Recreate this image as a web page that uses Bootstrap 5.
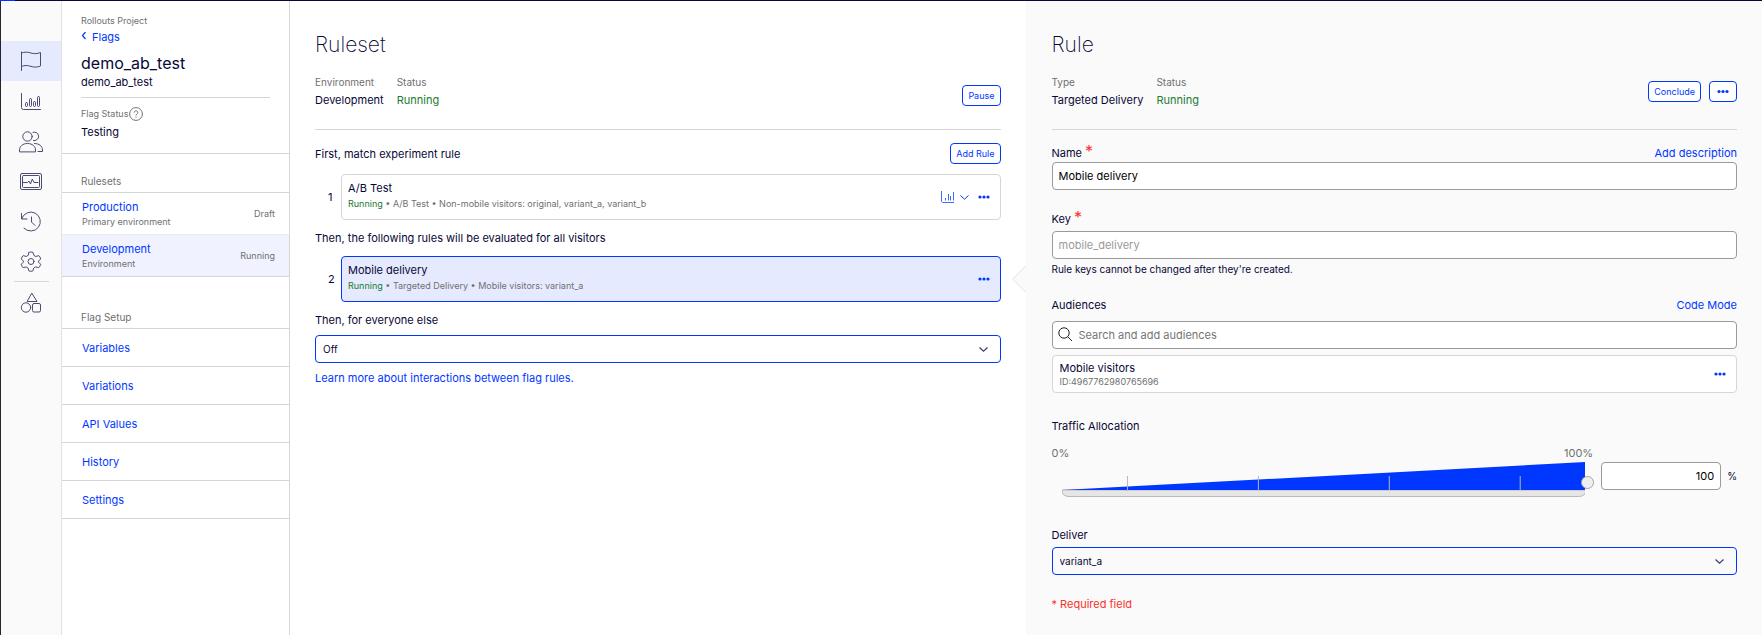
<!DOCTYPE html>
<html lang="en">
<head>
<meta charset="utf-8">
<meta name="viewport" content="width=device-width, initial-scale=1">
<title>demo_ab_test – Flags</title>
<link href="https://cdn.jsdelivr.net/npm/bootstrap@5.3.0/dist/css/bootstrap.min.css" rel="stylesheet">
<style>
  :root { --brand: #0037ff; --ink: #080736; --muted-ink: #707070; --line: #d6d6d6; --ok: #227a33; --err: #f9322c; }
  body { font: 11px/16px Inter, "Liberation Sans", sans-serif; color: var(--ink); border-top: 1px solid var(--ink); border-left: 1px solid #26242f; background: #fff; }
  a { color: var(--brand); text-decoration: none; }
  a:hover { text-decoration: underline; }
  .load-bar { top: 0; left: 0; width: 15px; height: 1px; background: var(--brand); }
  .tiny { font-size: 9px; }
  .label-text { font-size: 10px; color: var(--muted-ink); }
  .muted { color: var(--muted-ink); }
  .ok { color: var(--ok); }
  .err { color: var(--err); }
  .rule-line { border-top: 1px solid var(--line); }

  .rail { width: 61px; background: #fafafa; border-right: 1px solid #e2e2e2; padding-top: 40px; }
  .rail a { height: 40px; }
  .rail a.active { background: #e5eaff; }
  .rail svg { width: 24px; height: 24px; fill: none; stroke: #4b4a72; stroke-width: 1; stroke-linecap: round; stroke-linejoin: round; }
  .rail-split { width: 35px; margin: 0 auto 1px 13px; }

  .side { width: 228px; border-right: 1px solid var(--line); }
  .side-head { padding: 12px 19px 13px; }
  .flag-name { font-size: 16px; line-height: 22px; font-weight: 400; margin: 7px 0 0; }
  .flag-key { margin-bottom: 7px; }
  .flag-status { margin-bottom: 2px; }
  .help-icon { margin-left: 1px; }
  .side-title { font-size: 10px; font-weight: 400; line-height: 16px; color: var(--muted-ink); margin: 0; padding: 19px 19px 3px; border-top: 1px solid var(--line); }
  .side-title.later { padding-top: 32px; border-top: 0; }
  .side-list { border-top: 1px solid var(--line); }
  .side-list a { padding: 0 14px 0 20px; border-bottom: 1px solid var(--line); }
  .side-list:not(.envs) a { height: 38px; }
  .envs a { height: 42px; }
  .envs a:first-child { border-bottom-color: #ececec; }
  .envs a.active { background: #f0f2ff; }
  .envs .tiny { line-height: 14px; }

  .pane { padding: 28px 25px 24px; min-width: 0; flex: 1 1 0; }
  .pane-rule { background: #fafafa; padding-left: 26px; }
  .pane h1 { font-size: 21px; line-height: 32px; font-weight: 200; margin: 0 0 13px; }
  .pane-head { padding-bottom: 21px; border-bottom: 1px solid var(--line); margin-bottom: 13px; }
  .pane-rule .pane-head { margin-bottom: 15px; }
  .fact { padding-right: 13px; }
  .fact .label-text { margin-bottom: 2px; }

  .btn-line { --bs-btn-color: var(--brand); --bs-btn-border-color: var(--brand); --bs-btn-bg: #fff; --bs-btn-hover-color: #fff; --bs-btn-hover-bg: var(--brand); --bs-btn-font-size: 9px; --bs-btn-line-height: 19px; --bs-btn-padding-x: 5px; --bs-btn-padding-y: 0px; --bs-btn-border-radius: 4px; }
  .btn-dots { --bs-btn-padding-x: 7px; }
  .btn-pause { margin-bottom: 2px; }
  .btn-bare { border: 0; padding: 0; background: none; color: var(--brand); line-height: 1; }
  .btn svg, .btn-bare svg { display: block; }
  .btn-dots svg { height: 19px; }

  .rule-row { margin: 10px 0; }
  .rule-num { width: 26px; padding-left: 13px; }
  .rule-card { border: 1px solid var(--line); border-radius: 4px; height: 46px; padding: 0 10px 0 6px; background: #fff; }
  .rule-card.active { border-color: var(--brand); background: #e5eaff; }
  .rule-text { padding-bottom: 3px; }
  .pointer { left: 100%; top: 50%; margin-left: 12px; transform: translateY(-50%); }
  .everyone label, .everyone select { margin-bottom: 7px; }

  .form-control, .form-select { font-size: 11px; line-height: 16px; min-height: 28px; padding: 5px 6px; border: 1px solid #9a9a9a; border-radius: 4px; color: #000; }
  .form-select { border-color: var(--brand); color: var(--ink); font-size: 10px; padding-left: 7px; background-color: transparent; background-position: right 11px center; background-size: 11px 11px;
    --bs-form-select-bg-img: url("data:image/svg+xml,%3csvg xmlns='http://www.w3.org/2000/svg' viewBox='0 0 11 11'%3e%3cpath d='M1.5 3.5 5.5 7.2 9.500 3.5' fill='none' stroke='%23403f66' stroke-width='1.2'/%3e%3c/svg%3e"); background-image: var(--bs-form-select-bg-img); }
  .form-control::placeholder { color: #757575; }
  .form-control:disabled { background: #fff; color: #9a9a9a; opacity: 1; }
  .search-box { margin-bottom: 6px; }
  .search-box .form-control { padding-left: 26px; }
  .search-box svg { left: 6px; top: 6px; }
  .star { font-size: 16px; line-height: 12px; }
  .hint { font-size: 10px; line-height: 14px; padding-top: 3px; }
  .audience { border: 1px solid var(--line); border-radius: 4px; background: #fff; padding: 4px 10px 4px 7px; }
  .audience .tiny { line-height: 12px; }

  .field { margin-bottom: 21px; }
  .field-wide { margin-bottom: 25px; }
  .field-traffic { margin-bottom: 30px; }
  .field-traffic > label { margin-bottom: 11px; }
  .field-name > div { margin-bottom: 1px; }
  .ramp { height: 35px; margin: 1px 8px 0 10px; }
  .ramp svg { width: 100%; height: 35px; display: block; }
  .ramp input { appearance: none; -webkit-appearance: none; background: none; top: 14px; left: 0; width: calc(100% + 9px); height: 13px; margin: 0; }
  .ramp input::-webkit-slider-thumb { -webkit-appearance: none; width: 13px; height: 13px; border-radius: 50%; background: #efefef; border: 1px solid #a3a3a3; }
  .ramp input::-moz-range-thumb { width: 11px; height: 11px; border-radius: 50%; background: #efefef; border: 1px solid #a3a3a3; }
  .percent { width: 120px; text-align: right; }
  .percent-box { padding: 17px 0 0 8px; }
  .percent-sign { padding: 6px 0 0 6px; font-size: 10px; }
</style>
</head>
<body>
<svg class="d-none">
  <symbol id="dots" viewBox="0 0 12 4"><circle cx="2" cy="2" r="1.6"/><circle cx="6" cy="2" r="1.6"/><circle cx="10" cy="2" r="1.6"/></symbol>
</svg>
<div class="load-bar position-absolute"></div>
<div class="d-flex align-items-stretch min-vh-100">

  <nav class="rail flex-shrink-0 d-flex flex-column" aria-label="Product">
    <a href="#" class="active d-flex align-items-center justify-content-center" aria-label="Flags"><svg viewBox="0 0 24 24"><path d="M2.500 3v18.500M2.500 4c3-1.300 6.500-1 9.500 0s6.500.8 9.500-.5v13.500c-3 1.300-6.500 1.500-9.500.4s-6.500-1.300-9.500 0"/></svg></a>
    <a href="#" class="d-flex align-items-center justify-content-center" aria-label="Reports"><svg viewBox="0 0 24 24"><path d="M2.500 4.500v14a2 2 0 0 0 2 2h17"/><rect x="6.500" y="13.500" width="2" height="4" rx="1"/><rect x="10.500" y="9.500" width="2" height="8" rx="1"/><rect x="14.500" y="12.500" width="2" height="5" rx="1"/><rect x="18.500" y="7.500" width="2" height="10" rx="1"/></svg></a>
    <a href="#" class="d-flex align-items-center justify-content-center" aria-label="Audiences"><svg viewBox="0 0 24 24"><circle cx="8.500" cy="7.500" r="4.700"/><path d="M14 3.300a4.300 4.300 0 1 1 .5 8.300M.5 22.500v-1.500c0-3.500 3-6.500 8-6.500s8 3 8 6.500v1.500zM15.500 14.500c4.500 0 8 2.500 8 6.500v1.500h-4.500"/></svg></a>
    <a href="#" class="d-flex align-items-center justify-content-center" aria-label="Events"><svg viewBox="0 0 24 24"><rect x="1.500" y="4.500" width="21" height="16" rx="1.500"/><rect x="3.500" y="6.500" width="17" height="12" rx="1"/><path d="M3.500 13.500h5l1.500-1.500 1.500 3 1.800-5 1.700 3.500h4"/></svg></a>
    <a href="#" class="d-flex align-items-center justify-content-center" aria-label="History"><svg viewBox="0 0 24 24"><path d="M2.500 4.500v5.500h5.500M2.800 9.500A9.500 9.500 0 1 1 5 19.200M12.500 8v5l3.500 3.500"/></svg></a>
    <a href="#" class="d-flex align-items-center justify-content-center" aria-label="Settings"><svg viewBox="0 0 24 24"><circle cx="12" cy="12.500" r="3"/><path d="M10 3.300q2-.8 4 0l.8 3 2 1.200 3-.9q1.500 1.300 1.900 3.300l-2.200 2.200v1l2.200 2.200q-.6 2-2 3.400l-3-.8-2 1.200-.8 2.800q-2 .8-4 0l-.8-2.800-2-1.200-3 .8q-1.400-1.400-1.900-3.400l2.200-2.200v-1L2.300 9.900q.5-2 1.900-3.300l3 .9 2-1.200z"/></svg></a>
    <div class="rail-split rule-line"></div>
    <a href="#" class="d-flex align-items-center justify-content-center" aria-label="Integrations"><svg viewBox="0 0 24 24"><path d="M13 2.500l5 8H8.500z"/><circle cx="7" cy="16.500" r="4.700"/><rect x="13.500" y="12.500" width="8" height="8.500" rx="1.500"/></svg></a>
  </nav>

  <aside class="side flex-shrink-0">
    <div class="side-head">
      <div class="tiny muted">Rollouts Project</div>
      <a href="#" class="d-flex align-items-center"><svg width="11" height="10" viewBox="0 0 11 10" fill="none" stroke="#0037ff" stroke-width="1.200" aria-hidden="true"><path d="M4.500 0 1.500 3.500l3 3.500"/></svg>Flags</a>
      <h2 class="flag-name">demo_ab_test</h2>
      <div class="flag-key">demo_ab_test</div>
      <div class="rule-line pt-2">
        <div class="flag-status tiny muted d-flex align-items-center">Flag Status
          <svg class="help-icon" width="14" height="14" viewBox="0 0 14 14" fill="none" stroke="#707070" aria-hidden="true"><circle cx="7" cy="7" r="6.400"/><path d="M5.200 5.600c0-2.400 3.600-2.400 3.600 0C8.800 7 7 7 7 8.500M7 9.600v1"/></svg>
        </div>
        <div>Testing</div>
      </div>
    </div>
    <h3 class="side-title">Rulesets</h3>
    <div class="side-list envs d-flex flex-column">
      <a href="#" class="d-flex align-items-center justify-content-between">
        <span class="d-flex flex-column"><span>Production</span><span class="tiny muted">Primary environment</span></span><span class="tiny muted">Draft</span>
      </a>
      <a href="#" class="active d-flex align-items-center justify-content-between">
        <span class="d-flex flex-column"><span>Development</span><span class="tiny muted">Environment</span></span><span class="tiny muted">Running</span>
      </a>
    </div>
    <h3 class="side-title later">Flag Setup</h3>
    <nav class="side-list d-flex flex-column" aria-label="Flag setup">
      <a href="#" class="d-flex align-items-center">Variables</a>
      <a href="#" class="d-flex align-items-center">Variations</a>
      <a href="#" class="d-flex align-items-center">API Values</a>
      <a href="#" class="d-flex align-items-center">History</a>
      <a href="#" class="d-flex align-items-center">Settings</a>
    </nav>
  </aside>

  <main class="pane">
    <h1>Ruleset</h1>
    <div class="pane-head d-flex">
      <div class="fact"><div class="label-text">Environment</div>Development</div>
      <div class="fact"><div class="label-text">Status</div><span class="ok">Running</span></div>
      <button type="button" class="btn btn-line btn-pause ms-auto align-self-end">Pause</button>
    </div>
    <div class="d-flex align-items-center justify-content-between">
      <span>First, match experiment rule</span>
      <button type="button" class="btn btn-line">Add Rule</button>
    </div>
    <div class="rule-row d-flex align-items-center">
      <div class="rule-num">1</div>
      <div class="rule-card flex-grow-1 d-flex align-items-center">
        <div class="rule-text me-auto"><div>A/B Test</div><div class="tiny muted"><span class="ok">Running</span> • A/B Test • Non-mobile visitors: original, variant_a, variant_b</div></div>
        <button type="button" class="btn-bare d-flex align-items-center gap-1 me-2" aria-label="Results">
          <svg width="14" height="12" viewBox="0 0 14 12" fill="none" stroke="#0037ff" stroke-opacity=".75" aria-hidden="true"><path d="M.5 0v10.500l1 1H13M4.500 7v2.500M7.500 3v6.500M9.500 5v4.500M12.500 1v8.500"/></svg>
          <svg width="11" height="11" viewBox="0 0 11 11" fill="none" stroke="#0037ff" aria-hidden="true"><path d="M1.500 3.500 5.500 7.200 9.500 3.500"/></svg>
        </button>
        <button type="button" class="btn-bare" aria-label="More"><svg width="12" height="4" fill="currentColor"><use href="#dots"/></svg></button>
      </div>
    </div>
    <div>Then, the following rules will be evaluated for all visitors</div>
    <div class="rule-row d-flex align-items-center">
      <div class="rule-num">2</div>
      <div class="rule-card active position-relative flex-grow-1 d-flex align-items-center">
        <div class="rule-text me-auto"><div>Mobile delivery</div><div class="tiny muted"><span class="ok">Running</span> • Targeted Delivery • Mobile visitors: variant_a</div></div>
        <button type="button" class="btn-bare" aria-label="More"><svg width="12" height="4" fill="currentColor"><use href="#dots"/></svg></button>
        <svg class="pointer position-absolute" width="14" height="28" viewBox="0 0 14 28" aria-hidden="true"><path d="M14 .5.7 14 14 27.500" fill="#fafafa" stroke="#e2e2e2"/></svg>
      </div>
    </div>
    <div class="everyone">
      <label for="everyone" class="d-block">Then, for everyone else</label>
      <select id="everyone" class="form-select"><option>Off</option><option>On</option></select>
      <a href="#">Learn more about interactions between flag rules.</a>
    </div>
  </main>

  <section class="pane pane-rule">
    <h1>Rule</h1>
    <div class="pane-head d-flex">
      <div class="fact"><div class="label-text">Type</div>Targeted Delivery</div>
      <div class="fact"><div class="label-text">Status</div><span class="ok">Running</span></div>
      <div class="d-flex align-items-center gap-2 ms-auto">
        <button type="button" class="btn btn-line">Conclude</button>
        <button type="button" class="btn btn-line btn-dots" aria-label="More"><svg width="12" fill="currentColor" aria-hidden="true"><use href="#dots"/></svg></button>
      </div>
    </div>

    <div class="field field-name">
      <div class="d-flex justify-content-between"><label for="rule-name">Name <span class="star err">*</span></label><a href="#">Add description</a></div>
      <input id="rule-name" type="text" class="form-control" value="Mobile delivery">
    </div>
    <div class="field">
      <label for="rule-key" class="d-block mb-1">Key <span class="star err">*</span></label>
      <input id="rule-key" type="text" class="form-control" value="mobile_delivery" disabled>
      <div class="hint">Rule keys cannot be changed after they're created.</div>
    </div>
    <div class="field field-wide">
      <div class="d-flex justify-content-between mb-2"><label for="aud">Audiences</label><a href="#">Code Mode</a></div>
      <div class="search-box position-relative">
        <svg class="position-absolute" width="15" height="15" viewBox="0 0 15 15" fill="none" stroke="#222" aria-hidden="true"><circle cx="6" cy="6" r="5.200"/><path d="m9.700 9.700 4.300 4.300"/></svg>
        <input id="aud" type="search" class="form-control" placeholder="Search and add audiences">
      </div>
      <div class="audience d-flex align-items-center">
        <div class="me-auto"><div>Mobile visitors</div><div class="tiny muted">ID:4967762980765696</div></div>
        <button type="button" class="btn-bare" aria-label="More"><svg width="12" height="4" fill="currentColor"><use href="#dots"/></svg></button>
      </div>
    </div>
    <div class="field field-traffic">
      <label for="traffic" class="d-block">Traffic Allocation</label>
      <div class="d-flex">
        <div class="flex-grow-1">
          <div class="d-flex justify-content-between muted"><span>0%</span><span>100%</span></div>
          <div class="ramp position-relative">
            <svg viewBox="0 0 524 35" preserveAspectRatio="none" aria-hidden="true">
              <path d="M0 28h524q0 6.500-7 6.500H7Q0 34.500 0 28z" fill="#e6e6e6" stroke="#b8b8b8"/>
              <path d="M0 28 524 0v28z" fill="#0037ff"/>
              <path d="M65.500 14v15M196.500 14v15M327.500 14v15M458.500 14v15" stroke="#b8b8b8"/>
            </svg>
            <input id="traffic" type="range" class="position-absolute" min="0" max="100" value="100">
          </div>
        </div>
        <div class="percent-box d-flex align-items-start">
          <input type="text" class="form-control percent" value="100" aria-label="Traffic percentage"><span class="percent-sign">%</span>
        </div>
      </div>
    </div>
    <div class="field">
      <label for="deliver" class="d-block mb-1">Deliver</label>
      <select id="deliver" class="form-select"><option>variant_a</option><option>variant_b</option></select>
    </div>
    <div class="err">* Required field</div>
  </section>
</div>
<script src="https://cdn.jsdelivr.net/npm/bootstrap@5.3.0/dist/js/bootstrap.bundle.min.js"></script>
</body>
</html>
